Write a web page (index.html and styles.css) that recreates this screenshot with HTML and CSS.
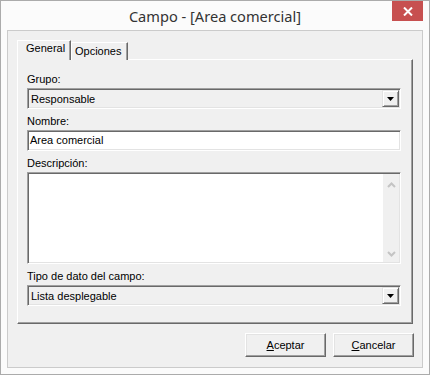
FILE: index.html
```html
<!DOCTYPE html>
<html lang="es">
<head>
    <meta charset="UTF-8">
    <title>Campo - [Area comercial]</title>
    <link rel="stylesheet" href="styles.css">
</head>
<body>
    <div class="window">
        <!-- Title bar -->
        <div class="titlebar">
            <span class="title">Campo - [Area comercial]</span>
            <button class="close" aria-label="Cerrar">
                <svg width="10" height="9" viewBox="0 0 10 9"><path d="M1 0.5 L9 8.5 M9 0.5 L1 8.5" stroke="#fff" stroke-width="2"/></svg>
            </button>
        </div>

        <div class="client">
            <div class="tabs">
                <div class="tab active">General</div>
                <div class="tab">Opciones</div>
            </div>

            <div class="panel">
                <div class="field">
                    <label>Grupo:</label>
                    <div class="combo">
                        <span>Responsable</span>
                        <span class="drop"><svg width="7" height="4" viewBox="0 0 7 4"><path d="M0 0 H7 L3.5 4 Z" fill="#000"/></svg></span>
                    </div>
                </div>
                <div class="field">
                    <label>Nombre:</label>
                    <div class="edit">Area comercial</div>
                </div>
                <div class="field">
                    <label>Descripción:</label>
                    <div class="memo">
                        <div class="memo-text"></div>
                        <div class="vscroll">
                            <svg width="9" height="6" viewBox="0 0 9 6"><path d="M1 5 L4.5 1.5 L8 5" fill="none" stroke="#c4c4c4" stroke-width="2"/></svg>
                            <svg width="9" height="6" viewBox="0 0 9 6"><path d="M1 1 L4.5 4.5 L8 1" fill="none" stroke="#c4c4c4" stroke-width="2"/></svg>
                        </div>
                    </div>
                </div>
                <div class="field">
                    <label>Tipo de dato del campo:</label>
                    <div class="combo">
                        <span>Lista desplegable</span>
                        <span class="drop"><svg width="7" height="4" viewBox="0 0 7 4"><path d="M0 0 H7 L3.5 4 Z" fill="#000"/></svg></span>
                    </div>
                </div>
            </div>

            <div class="actions">
                <button class="btn"><u>A</u>ceptar</button>
                <button class="btn"><u>C</u>ancelar</button>
            </div>
        </div>
    </div>
</body>
</html>
```

FILE: styles.css
```css
* {
    box-sizing: border-box;
}
body {
    margin: 0;
    font-family: 'Liberation Sans', Arial, sans-serif;
    font-size: 11px;
    color: #000;
    background: #fff;
}
.window {
    position: relative;
    width: 430px;
    height: 375px;
    border: 1px solid #ababab;
    background: #fbfbfb;
    padding: 0 6px 6px 6px;
    display: flex;
    flex-direction: column;
}
.titlebar {
    height: 29px;
    display: flex;
    align-items: center;
    justify-content: center;
}
.title {
    font-family: 'Noto Sans', sans-serif;
    font-size: 14.6px;
    color: #333;
    margin-top: 1px;
}
.close {
    position: absolute;
    top: 0;
    right: 6px;
    width: 31px;
    height: 20px;
    border: none;
    padding: 0;
    background: #c75050;
    display: flex;
    align-items: center;
    justify-content: center;
}
.client {
    flex: 1;
    border: 1px solid #cbcbcb;
    background: #f0f0f0;
    padding: 9px 8px 0 9px;
    display: flex;
    flex-direction: column;
}
.tabs {
    display: flex;
    align-items: flex-end;
    height: 20px;
    position: relative;
    z-index: 1;
}
.tab {
    height: 18px;
    line-height: 16px;
    padding-left: 3px;
    background: #f0f0f0;
    border-top: 1px solid #fff;
    border-left: 1px solid #fff;
    border-right: 1px solid #696969;
    box-shadow: inset -1px 0 #a0a0a0;
    width: 57px;
}
.tab.active {
    height: 20px;
    width: 54px;
    padding-left: 8px;
    line-height: 14px;
}
.panel {
    height: 265px;
    margin-top: -1px;
    margin-right: 1px;
    border-top: 1px solid #fff;
    border-left: 1px solid #fff;
    border-right: 1px solid #696969;
    border-bottom: 1px solid #696969;
    box-shadow: inset -1px -1px #a0a0a0;
    padding: 13px 11px 0 9px;
}
.field + .field {
    margin-top: 6px;
}
.field label {
    display: block;
    line-height: 13px;
    margin-bottom: 2px;
}
.combo, .edit, .memo {
    height: 21px;
    border: 1px solid;
    border-color: #a0a0a0 #fff #fff #a0a0a0;
    box-shadow: inset 1px 1px #696969, inset -1px -1px #e3e3e3;
}
.combo {
    background: #f0f0f0;
    display: flex;
    align-items: center;
    padding: 0 1px 0 3px;
}
.drop {
    margin-left: auto;
    width: 17px;
    height: 17px;
    border: 1px solid;
    border-color: #e3e3e3 #696969 #696969 #e3e3e3;
    box-shadow: inset 1px 1px #fff, inset -1px -1px #a0a0a0;
    background: #f0f0f0;
    display: flex;
    align-items: center;
    justify-content: center;
}
.edit {
    background: #fff;
    line-height: 19px;
    padding-left: 2px;
}
.memo {
    height: 92px;
    background: #fff;
    display: flex;
    padding: 1px 1px 1px 1px;
}
.memo-text {
    flex: 1;
}
.vscroll {
    width: 16px;
    background: #f0f0f0;
    display: flex;
    flex-direction: column;
    justify-content: space-between;
    align-items: center;
    padding: 8px 0 5px 0;
}
.actions {
    display: flex;
    justify-content: flex-end;
    gap: 7px;
    margin-top: 9px;
}
.btn {
    width: 81px;
    height: 24px;
    font-family: 'Liberation Sans', Arial, sans-serif;
    font-size: 11px;
    color: #000;
    background: #f0f0f0;
    border: 1px solid;
    border-color: #fff #696969 #696969 #fff;
    box-shadow: inset -1px -1px #a0a0a0, inset 1px 1px #e3e3e3;
    padding: 0;
}
```
